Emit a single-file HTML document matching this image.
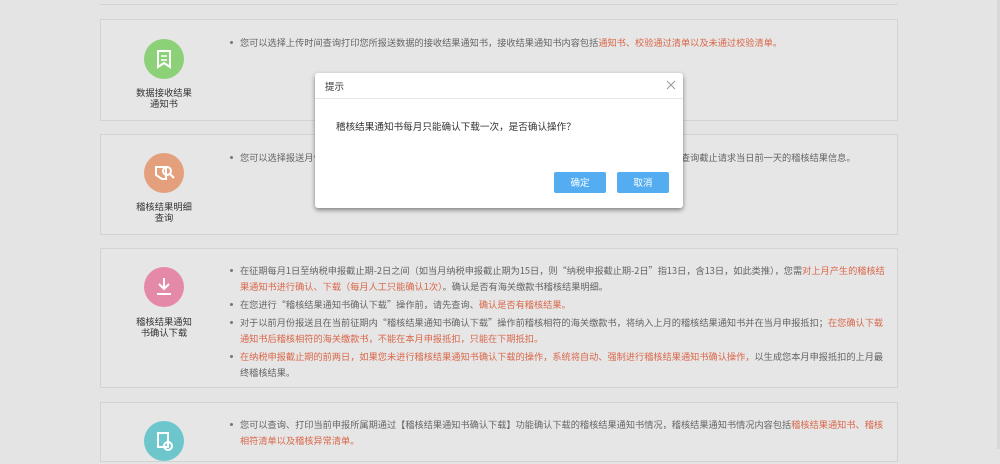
<!DOCTYPE html>
<html><head><meta charset="utf-8"><style>
*{margin:0;padding:0;box-sizing:border-box}
body{width:1000px;height:449px;overflow:hidden;background:#e4e4e4;font-family:"Noto Sans CJK SC","Liberation Sans",sans-serif;font-size:9.2px;color:#646464;position:relative}
.topline{position:absolute;left:100px;width:798px;top:4px;height:1px;background:#d3d3d3}
.panel{position:absolute;left:100px;width:798px;border:1px solid #d3d3d3;background:#e6e6e6}
.ic{position:absolute;left:43px;width:40px;height:40px;border-radius:50%}
.lbl{position:absolute;left:20px;width:86px;text-align:center;color:#333;line-height:11px;font-size:9.3px}
ul{position:absolute;left:128px;right:9px;list-style:none}
li{position:relative;padding-left:11px;line-height:16px;margin-bottom:2px}
li:before{content:"";position:absolute;left:1px;top:7px;width:3px;height:3px;background:#777;border-radius:50%}
.r{color:#d9674a}
.dlg{position:absolute;left:315px;top:73px;width:368px;height:135px;background:#fff;border-radius:3px;box-shadow:0 2px 5px rgba(0,0,0,.45)}
.hd{height:26px;border-bottom:1px solid #e6e6e6;padding:6px 0 0 10px;color:#333;font-size:9.5px}
.x{position:absolute;right:6px;top:6px;width:12px;height:12px}
.btn{position:absolute;top:99px;width:52px;height:21px;background:#54adf0;color:#fff;text-align:center;line-height:21px;border-radius:2px;font-size:9.5px}
</style></head><body>
<div class="topline"></div>
<div class="panel" style="top:19px;height:102px">
 <div class="ic" style="top:19px;background:#8cd078"><svg width="40" height="40"><path d="M14 12h12v16l-6-4-6 4z" fill="none" stroke="#fff" stroke-width="2"/><path d="M17 17h6M17 21h6" stroke="#fff" stroke-width="1.6"/></svg></div>
 <div class="lbl" style="top:67px">数据接收结果<br>通知书</div>
 <ul style="top:14px"><li>您可以选择上传时间查询打印您所报送数据的接收结果通知书，接收结果通知书内容包括<span class="r">通知书、校验通过清单以及未通过校验清单。</span></li></ul>
</div>
<div class="panel" style="top:134px;height:101px">
 <div class="ic" style="top:18px;background:#e4a07c"><svg width="40" height="40"><path d="M12 14h10v12h-4l-6-4z" fill="none" stroke="#fff" stroke-width="2"/><circle cx="23" cy="18" r="4" fill="none" stroke="#fff" stroke-width="2"/><path d="M26 21l4 4" stroke="#fff" stroke-width="2"/></svg></div>
 <div class="lbl" style="top:66px">稽核结果明细<br>查询</div>
 <ul style="top:14px"><li>您可以选择报送月份，查询打印您所报送数据的稽核结果明细，稽核结果明细包括<span class="r">稽核结果</span>，选择当月可实时查询截止请求当日前一天的稽核结果信息。</li></ul>
</div>
<div class="panel" style="top:248px;height:140px">
 <div class="ic" style="top:18px;background:#e48aa8"><svg width="40" height="40"><path d="M20 11v11M15 17l5 5 5-5" fill="none" stroke="#fff" stroke-width="2"/><path d="M13 27h14" stroke="#fff" stroke-width="2"/></svg></div>
 <div class="lbl" style="top:67px">稽核结果通知<br>书确认下载</div>
 <ul style="top:13px">
 <li>在征期每月1日至纳税申报截止期-2日之间（如当月纳税申报截止期为15日，则“纳税申报截止期-2日”指13日，含13日，如此类推），您需<span class="r">对上月产生的稽核结果通知书进行确认、下载（每月人工只能确认1次）</span>。确认是否有海关缴款书稽核结果明细。</li>
 <li>在您进行“稽核结果通知书确认下载”操作前，请先查询、<span class="r">确认是否有稽核结果。</span></li>
 <li>对于以前月份报送且在当前征期内“稽核结果通知书确认下载”操作前稽核相符的海关缴款书，将纳入上月的稽核结果通知书并在当月申报抵扣；<span class="r">在您确认下载通知书后稽核相符的海关缴款书，不能在本月申报抵扣，只能在下期抵扣。</span></li>
 <li><span class="r">在纳税申报截止期的前两日，如果您未进行稽核结果通知书确认下载的操作，系统将自动、强制进行稽核结果通知书确认操作，</span>以生成您本月申报抵扣的上月最终稽核结果。</li>
 </ul>
</div>
<div class="panel" style="top:402px;height:60px">
 <div class="ic" style="top:18px;background:#6cc6cc"><svg width="40" height="40"><path d="M14 12h10v14h-10z" fill="none" stroke="#fff" stroke-width="2"/><circle cx="24" cy="25" r="4" fill="none" stroke="#fff" stroke-width="2"/></svg></div>
 <ul style="top:13px"><li>您可以查询、打印当前申报所属期通过【稽核结果通知书确认下载】功能确认下载的稽核结果通知书情况，稽核结果通知书情况内容包括<span class="r">稽核结果通知书、稽核相符清单以及稽核异常清单。</span></li></ul>
</div>
<div style="position:absolute;right:0;top:0;width:3px;height:449px;background:#d8d8d8"></div>
<div class="dlg">
 <div class="hd">提示</div>
 <svg class="x" viewBox="0 0 12 12"><path d="M2 2l8 8M10 2l-8 8" stroke="#999" stroke-width="1"/></svg>
 <div style="position:absolute;left:21px;top:46px;color:#333;font-size:9.6px">稽核结果通知书每月只能确认下载一次，是否确认操作？</div>
 <div class="btn" style="left:239px">确定</div>
 <div class="btn" style="left:302px">取消</div>
</div>
</body></html>
